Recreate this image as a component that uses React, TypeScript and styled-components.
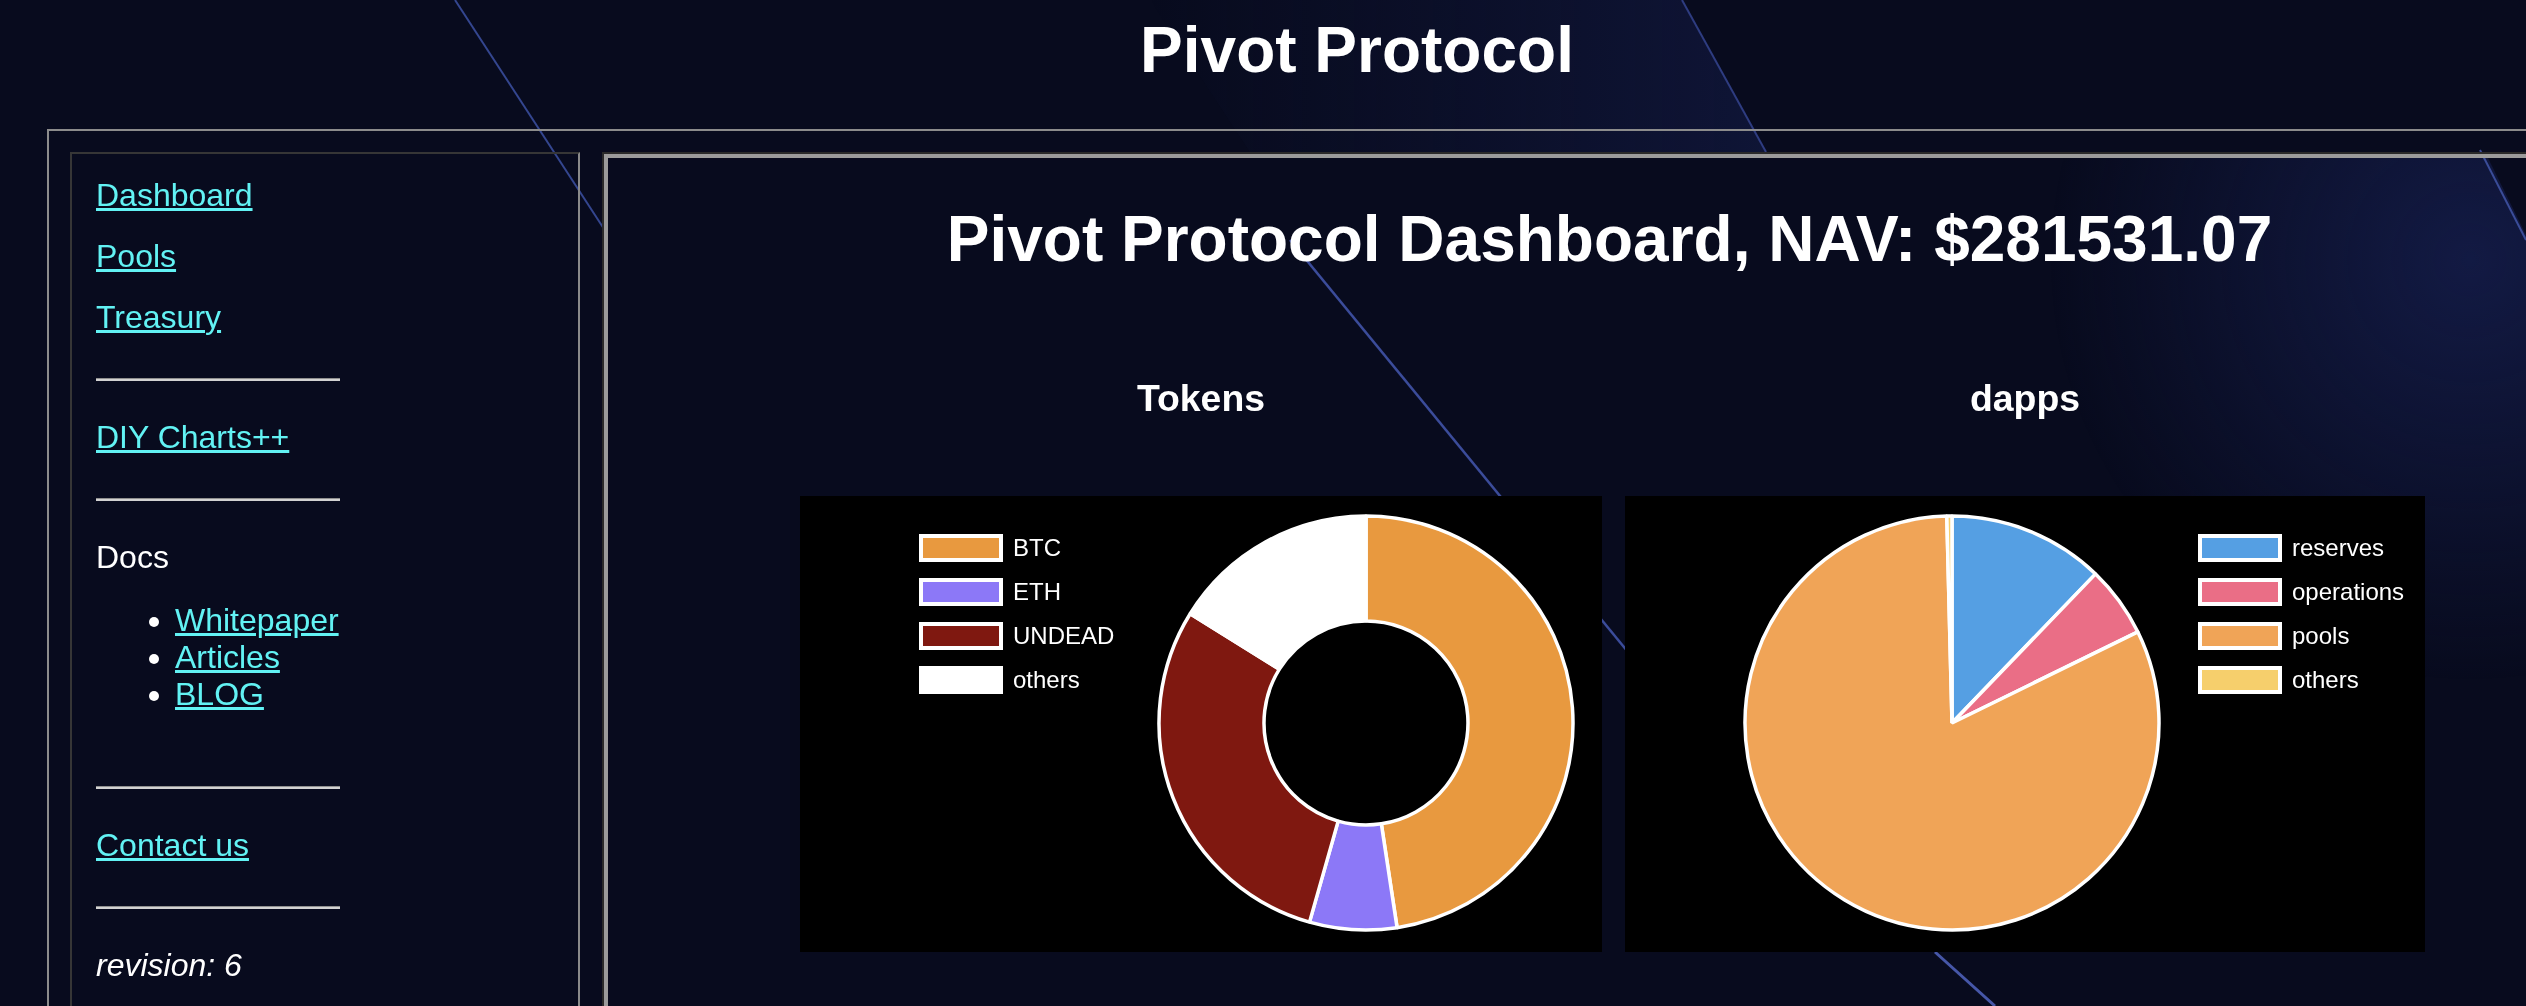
import React from 'react'
import styled, { createGlobalStyle } from 'styled-components'

const Colors = {
  bg: '#080b1e',
  link: '#62f2f4',
  white: '#ffffff',
  frame: '#8c8c8c',
  darkEdge: '#363636',
  lightEdge: '#8a8a8a',
  panelRim: '#9b9b9b',
}

const GlobalStyle = createGlobalStyle`
  html, body {
    margin: 0;
    padding: 0;
    background: ${Colors.bg};
    overflow: hidden;
  }
  body {
    font-family: 'Liberation Sans', Arial, Helvetica, sans-serif;
    color: ${Colors.white};
  }
`

const Backdrop = styled.svg`
  position: fixed;
  top: 0;
  left: 0;
  width: 2526px;
  height: 1006px;
  z-index: 0;
  pointer-events: none;
`

const Page = styled.div`
  position: relative;
  z-index: 1;
  width: 2714px;
`

const SiteTitle = styled.h1`
  margin: 13px 0 0;
  font-size: 64px;
  line-height: 74px;
  font-weight: 700;
  text-align: center;
`

const Frame = styled.div`
  box-sizing: border-box;
  width: 2593px;
  margin: 42px 0 0 47px;
  border: 2px solid ${Colors.frame};
  padding: 21px;
  display: flex;
  gap: 22px;
  align-items: stretch;
`

const Sidebar = styled.nav`
  box-sizing: border-box;
  width: 510px;
  min-height: 1100px;
  border: 2px solid;
  border-color: ${Colors.darkEdge} ${Colors.lightEdge} ${Colors.lightEdge} ${Colors.darkEdge};
  padding: 22.5px 24px;
  display: flex;
  flex-direction: column;
  align-items: flex-start;
`

const NavGroup = styled.div`
  display: flex;
  flex-direction: column;
  align-items: flex-start;
  gap: 24px;
`

const NavLink = styled.a<{ inline?: boolean }>`
  display: ${(p) => (p.inline ? 'inline' : 'block')};
  color: ${Colors.link};
  font-size: 32px;
  line-height: 37px;
  text-decoration: underline;
`

const Divider = styled.hr`
  width: 244px;
  height: 0;
  margin: 42px 0 38px;
  border: none;
  border-top: 1px solid #8f8f8f;
  border-bottom: 2px solid #d2d2d2;
`

const Label = styled.p<{ italic?: boolean }>`
  margin: 0;
  font-size: 32px;
  line-height: 37px;
  font-style: ${(p) => (p.italic ? 'italic' : 'normal')};
`

const DocList = styled.ul`
  margin: 26px 0 31.5px;
  padding-left: 79px;
  font-size: 32px;
  line-height: 37px;
  list-style: disc;
`

const MainFrame = styled.main`
  flex: 1;
  display: flex;
  border: 2px solid;
  border-color: #2a2a2a #777 #777 #2a2a2a;
`

const MainInner = styled.section`
  flex: 1;
  min-height: 1100px;
  border: 4px solid ${Colors.panelRim};
  padding-top: 44px;
`

const DashTitle = styled.h1`
  margin: 0;
  font-size: 64px;
  line-height: 74px;
  font-weight: 700;
  text-align: center;
`

const ChartsRow = styled.div`
  display: flex;
  justify-content: center;
  gap: 23px;
  margin-top: 101px;
  padding-left: 6px;
`

const ChartColumn = styled.div<{ w: number }>`
  width: ${(p) => p.w}px;
  display: flex;
  flex-direction: column;
  align-items: center;
`

const ChartHeading = styled.h3`
  margin: 0 0 76px;
  font-size: 37.4px;
  line-height: 43px;
  font-weight: 700;
`

const ChartCard = styled.svg`
  display: block;
  background: #000;
  height: 456px;
`

const LegendText = styled.text`
  font-family: 'Liberation Sans', Arial, sans-serif;
  font-size: 24px;
  fill: ${Colors.white};
`

type Slice = { label: string; value: number; color: string }

const tokens: Slice[] = [
  { label: 'BTC', value: 47.6, color: '#e8993f' },
  { label: 'ETH', value: 6.8, color: '#8c78f7' },
  { label: 'UNDEAD', value: 29.45, color: '#7f1810' },
  { label: 'others', value: 16.15, color: '#ffffff' },
]

const dapps: Slice[] = [
  { label: 'reserves', value: 12.2, color: '#559fe3' },
  { label: 'operations', value: 5.55, color: '#ea6e86' },
  { label: 'pools', value: 81.85, color: '#f0a457' },
  { label: 'others', value: 0.4, color: '#f6cf6c' },
]

const pt = (cx: number, cy: number, r: number, deg: number) => {
  const a = (deg * Math.PI) / 180
  return `${(cx + r * Math.sin(a)).toFixed(2)} ${(cy - r * Math.cos(a)).toFixed(2)}`
}

const arcPath = (cx: number, cy: number, ro: number, ri: number, a0: number, a1: number) => {
  const large = a1 - a0 > 180 ? 1 : 0
  if (ri === 0) {
    return `M ${cx} ${cy} L ${pt(cx, cy, ro, a0)} A ${ro} ${ro} 0 ${large} 1 ${pt(cx, cy, ro, a1)} Z`
  }
  return [
    `M ${pt(cx, cy, ro, a0)}`,
    `A ${ro} ${ro} 0 ${large} 1 ${pt(cx, cy, ro, a1)}`,
    `L ${pt(cx, cy, ri, a1)}`,
    `A ${ri} ${ri} 0 ${large} 0 ${pt(cx, cy, ri, a0)}`,
    'Z',
  ].join(' ')
}

const PieChart = ({
  data,
  width,
  cx,
  inner,
  legendX,
}: {
  data: Slice[]
  width: number
  cx: number
  inner: number
  legendX: number
}) => {
  const total = data.reduce((s, d) => s + d.value, 0)
  let start = 0
  return (
    <ChartCard width={width} viewBox={`0 0 ${width} 456`}>
      {data.map((d) => {
        const end = start + (d.value / total) * 360
        const path = arcPath(cx, 227, 207, inner, start, end)
        start = end
        return <path key={d.label} d={path} fill={d.color} stroke="#fff" strokeWidth={3.5} strokeLinejoin="bevel" />
      })}
      {data.map((d, i) => (
        <g key={d.label}>
          <rect x={legendX + 2} y={40 + i * 44} width={80} height={24} fill={d.color} stroke="#fff" strokeWidth={4} />
          <LegendText x={legendX + 94} y={60 + i * 44}>
            {d.label}
          </LegendText>
        </g>
      ))}
    </ChartCard>
  )
}

// decorative light streaks of the page background
const Streaks = () => (
  <Backdrop viewBox="0 0 2526 1006">
    <defs>
      <linearGradient id="bandA" gradientUnits="userSpaceOnUse" x1="1150" y1="0" x2="1766" y2="0">
        <stop offset="0" stopColor="#141b45" stopOpacity="0" />
        <stop offset="1" stopColor="#151d4a" stopOpacity="0.55" />
      </linearGradient>
      <radialGradient id="bandB" gradientUnits="userSpaceOnUse" cx="2470" cy="260" r="420">
        <stop offset="0" stopColor="#141c48" stopOpacity="0.9" />
        <stop offset="1" stopColor="#141c48" stopOpacity="0" />
      </radialGradient>
    </defs>
    <polygon points="1150,0 1682,0 1766,152 1250,152" fill="url(#bandA)" />
    <polygon points="2000,158 2488,158 2526,235 2526,720 2000,720" fill="url(#bandB)" />
    <line x1="455" y1="0" x2="606" y2="232" stroke="#34468f" strokeWidth="2" />
    <line x1="1290" y1="240" x2="1628" y2="652" stroke="#3b4c9a" strokeWidth="2.5" />
    <line x1="1682" y1="0" x2="1766" y2="152" stroke="#2e3c80" strokeWidth="2" />
    <line x1="2480" y1="150" x2="2526" y2="240" stroke="#3a4c98" strokeWidth="2" />
    <line x1="1935" y1="952" x2="1995" y2="1006" stroke="#4657a8" strokeWidth="3" />
  </Backdrop>
)

export default function App() {
  return (
    <>
      <GlobalStyle />
      <Streaks />
      <Page>
        <SiteTitle>Pivot Protocol</SiteTitle>
        <Frame>
          <Sidebar>
            <NavGroup>
              <NavLink href="#">Dashboard</NavLink>
              <NavLink href="#">Pools</NavLink>
              <NavLink href="#">Treasury</NavLink>
            </NavGroup>
            <Divider />
            <NavLink href="#">DIY Charts++</NavLink>
            <Divider />
            <Label>Docs</Label>
            <DocList>
              <li>
                <NavLink inline href="#">Whitepaper</NavLink>
              </li>
              <li>
                <NavLink inline href="#">Articles</NavLink>
              </li>
              <li>
                <NavLink inline href="#">BLOG</NavLink>
              </li>
            </DocList>
            <Divider />
            <NavLink href="#">Contact us</NavLink>
            <Divider />
            <Label italic>revision: 6</Label>
          </Sidebar>
          <MainFrame>
            <MainInner>
              <DashTitle>Pivot Protocol Dashboard, NAV: $281531.07</DashTitle>
              <ChartsRow>
                <ChartColumn w={802}>
                  <ChartHeading>Tokens</ChartHeading>
                  <PieChart data={tokens} width={802} cx={566} inner={102} legendX={119} />
                </ChartColumn>
                <ChartColumn w={800}>
                  <ChartHeading>dapps</ChartHeading>
                  <PieChart data={dapps} width={800} cx={327} inner={0} legendX={573} />
                </ChartColumn>
              </ChartsRow>
            </MainInner>
          </MainFrame>
        </Frame>
      </Page>
    </>
  )
}
